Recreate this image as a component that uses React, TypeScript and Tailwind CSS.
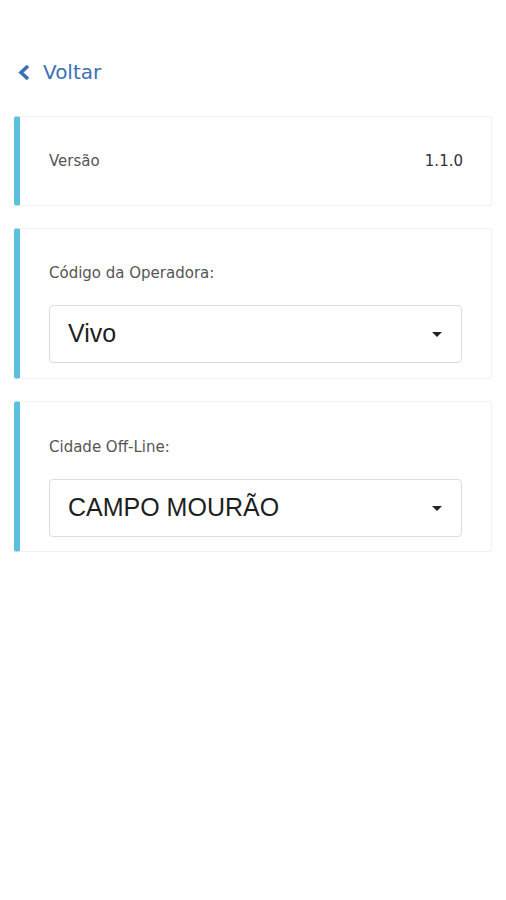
import React from "react";

const sans = { fontFamily: "'DejaVu Sans', Verdana, sans-serif" };
const arial = { fontFamily: "'Liberation Sans', Arial, sans-serif" };

const Caret = () => (
  <span className="w-0 h-0 border-l-[5px] border-r-[5px] border-t-[5px] border-l-transparent border-r-transparent border-t-[#222]" />
);

const Callout = ({ children, className = "" }: { children: React.ReactNode; className?: string }) => (
  <div className={"border border-[#f0f0f0] border-l-[6px] border-l-[#5bc0de] rounded-[3px] bg-white " + className}>
    {children}
  </div>
);

const SelectBox = ({ value }: { value: string }) => (
  <div className="h-[58px] flex items-center justify-between border border-[#dcdcdc] rounded-[4px] pl-[18px] pr-[19px] bg-white">
    <span className="text-[25px] text-[#1e1e1e]" style={arial}>{value}</span>
    <Caret />
  </div>
);

export default function App() {
  return (
    <div className="min-h-[900px] bg-white px-[14px] pt-[58px]" style={sans}>
      {/* back link */}
      <div className="flex items-center gap-[12px] h-[28px] pl-[3px] text-[#3b6fb6]">
        <svg width="14" height="17" viewBox="0 0 14 17">
          <path d="M11 2 L4 8.5 L11 15" fill="none" stroke="#3b6fb6" strokeWidth="3.6" strokeLinejoin="miter" />
        </svg>
        <span className="text-[20px] leading-none">Voltar</span>
      </div>

      <div className="mt-[30px] flex flex-col gap-[22px]">
        <Callout className="h-[90px] flex items-center justify-between pl-[29px] pr-[28px]">
          <span className="text-[15px] text-[#555]">Versão</span>
          <span className="text-[15px] text-[#333]">1.1.0</span>
        </Callout>

        <Callout className="pl-[29px] pr-[29px] pt-[35px] pb-[15px]">
          <div className="text-[15px] leading-[18px] text-[#555]">Código da Operadora:</div>
          <div className="mt-[23px]">
            <SelectBox value="Vivo" />
          </div>
        </Callout>

        <Callout className="pl-[29px] pr-[29px] pt-[36px] pb-[14px]">
          <div className="text-[15px] leading-[18px] text-[#555]">Cidade Off-Line:</div>
          <div className="mt-[23px]">
            <SelectBox value="CAMPO MOURÃO" />
          </div>
        </Callout>
      </div>
    </div>
  );
}
